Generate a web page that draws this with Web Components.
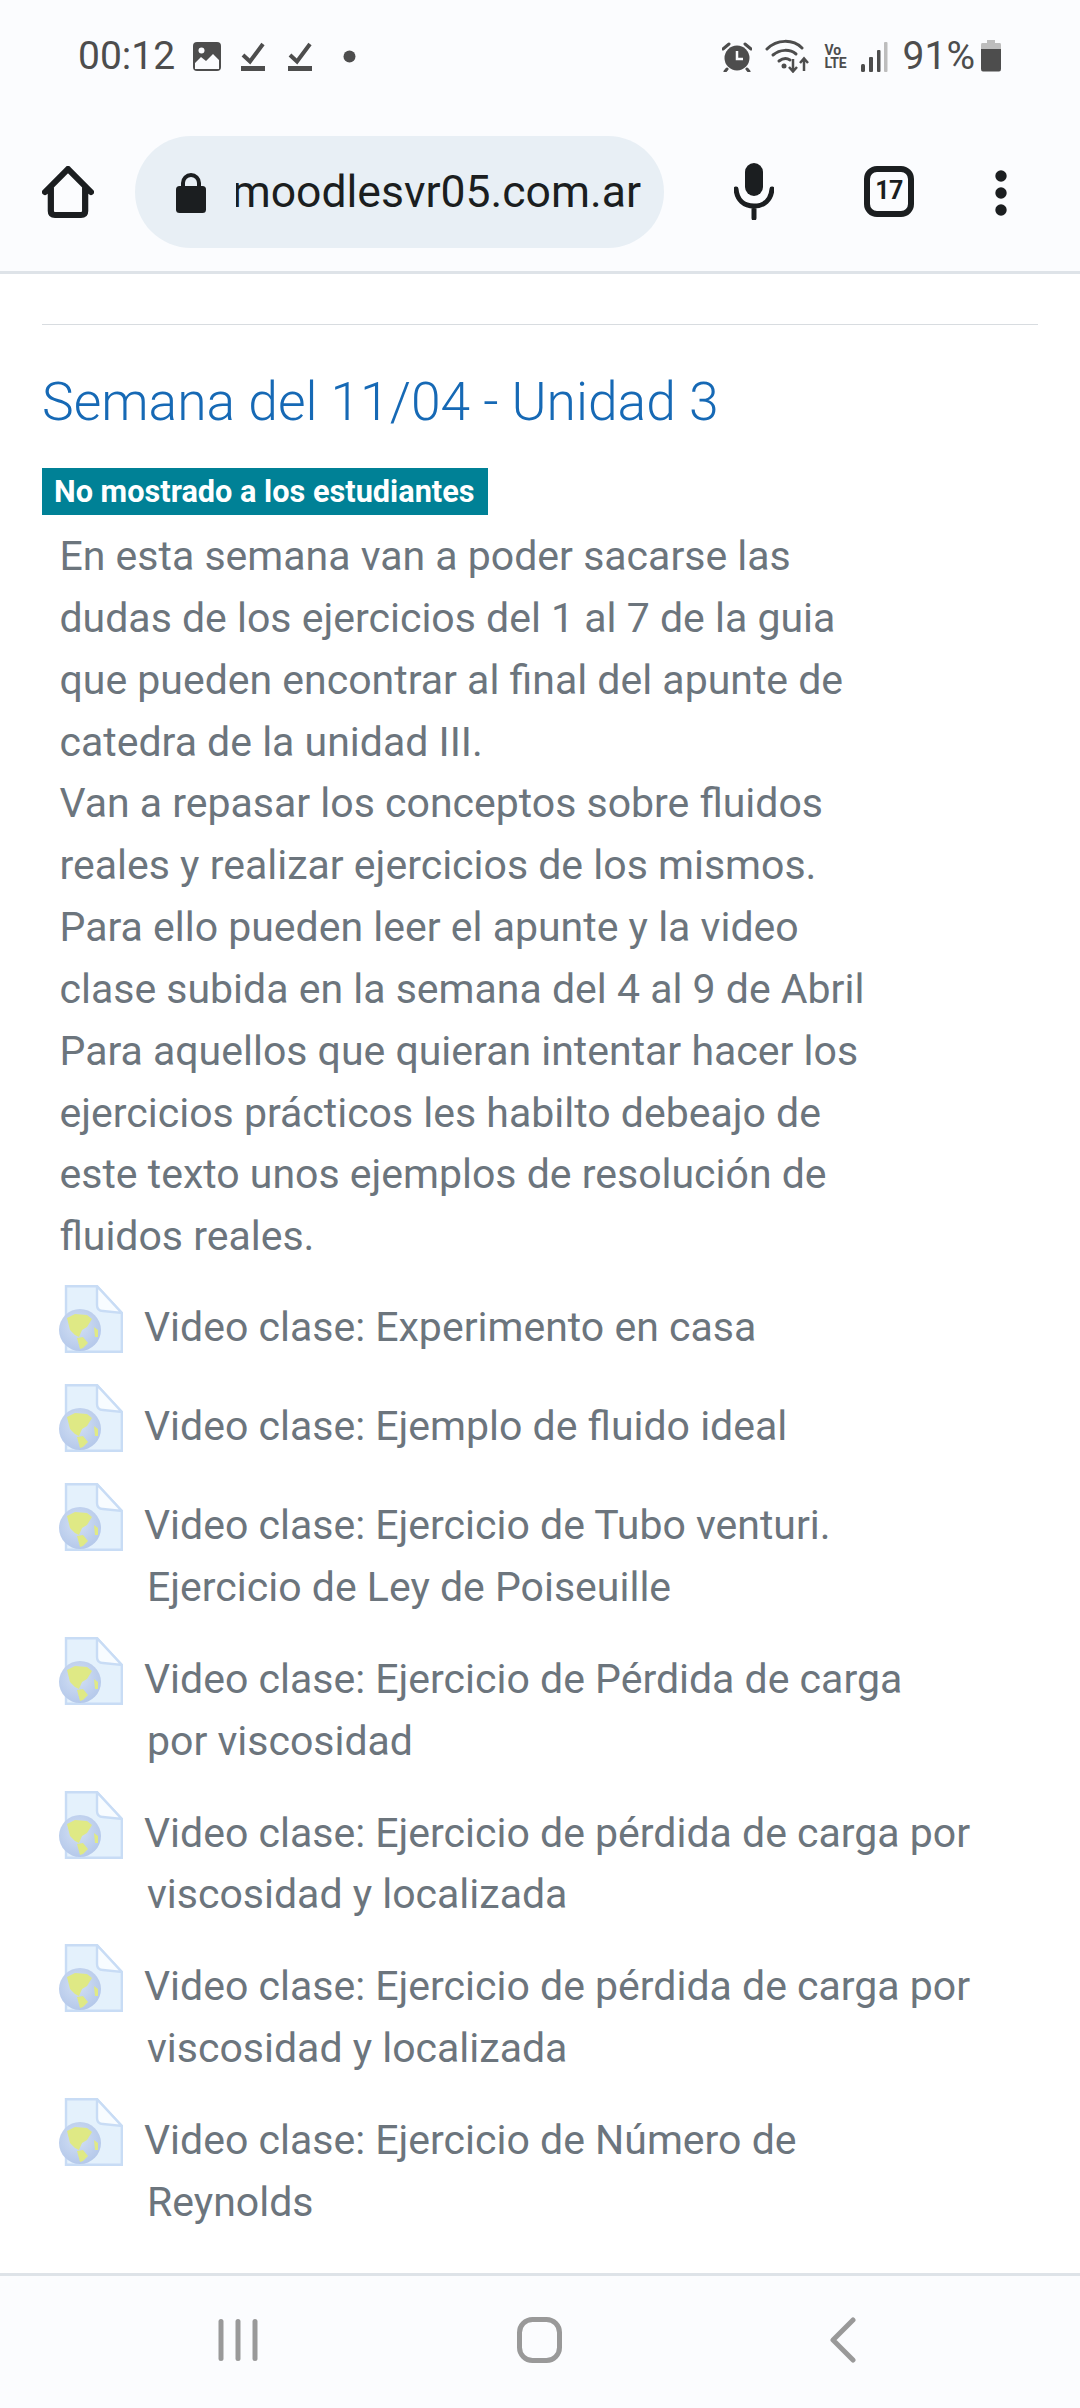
<!DOCTYPE html>
<html lang="es"><head><meta charset="utf-8"><title>Semana del 11/04</title>
<style>
html,body{margin:0;padding:0;background:#fff}
body{width:1080px;height:2408px;overflow:hidden;display:flex;flex-direction:column;font-family:Roboto,"Liberation Sans",sans-serif}
moodle-section{flex:1}
</style></head><body>
<status-bar></status-bar>
<browser-toolbar url="moodlesvr05.com.ar" tabs="17"></browser-toolbar>
<moodle-section heading="Semana del 11/04 - Unidad 3" badge="No mostrado a los estudiantes">
En esta semana van a poder sacarse las<br>dudas de los ejercicios del 1 al 7 de la guia<br>que pueden encontrar al final del apunte de<br>catedra de la unidad III.<br>Van a repasar los conceptos sobre fluidos<br>reales y realizar ejercicios de los mismos.<br>Para ello pueden leer el apunte y la video<br>clase subida en la semana del 4 al 9 de Abril<br>Para aquellos que quieran intentar hacer los<br>ejercicios prácticos les habilto debeajo de<br>este texto unos ejemplos de resolución de<br>fluidos reales.
<activity-item slot="items">Video clase: Experimento en casa</activity-item>
<activity-item slot="items">Video clase: Ejemplo de fluido ideal</activity-item>
<activity-item slot="items">Video clase: Ejercicio de Tubo venturi.<br>Ejercicio de Ley de Poiseuille</activity-item>
<activity-item slot="items">Video clase: Ejercicio de Pérdida de carga<br>por viscosidad</activity-item>
<activity-item slot="items">Video clase: Ejercicio de pérdida de carga por<br>viscosidad y localizada</activity-item>
<activity-item slot="items">Video clase: Ejercicio de pérdida de carga por<br>viscosidad y localizada</activity-item>
<activity-item slot="items">Video clase: Ejercicio de Número de<br>Reynolds</activity-item>
</moodle-section>
<nav-bar></nav-bar>
<script>
function def(name, css, html, setup){
  customElements.define(name, class extends HTMLElement{
    connectedCallback(){
      if(this.shadowRoot) return;
      const r=this.attachShadow({mode:'open'});
      r.innerHTML='<style>'+css+'</style>'+(typeof html==='function'?html(this):html);
    }
  });
}
def('status-bar',`
:host{display:flex;height:136px;box-sizing:border-box;background:#fbfcfe;color:#4d4d4d;align-items:flex-start;padding:0 78px 0 78px;justify-content:space-between;font-family:Roboto,sans-serif}
.g{display:flex;align-items:flex-start;height:136px}
.t{font-size:39px;line-height:44px;margin-top:34px}
svg{display:block;flex:none}
`,`
<div class="g"><span class="t">00:12</span>
<svg style="margin:42px 0 0 17px" width="30" height="30" viewBox="0 0 30 30"><rect x="1" y="0" width="28" height="29" rx="4" fill="#4d4d4d"/><circle cx="9.500" cy="8.500" r="3" fill="#fbfcfe"/><path d="M3 27V21L9 15L14 19L21 12L27 18V27Z" fill="#fbfcfe"/></svg>
<svg style="margin:41px 0 0 18px" width="26" height="31" viewBox="0 0 26 31"><path d="M3 14L10 20.500L23 3" fill="none" stroke="#4d4d4d" stroke-width="4"/><rect x="1" y="25" width="24" height="5" fill="#4d4d4d"/></svg>
<svg style="margin:41px 0 0 21px" width="26" height="31" viewBox="0 0 26 31"><path d="M3 14L10 20.500L23 3" fill="none" stroke="#4d4d4d" stroke-width="4"/><rect x="1" y="25" width="24" height="5" fill="#4d4d4d"/></svg>
<svg style="margin:50px 0 0 30px" width="13" height="13" viewBox="0 0 13 13"><circle cx="6.500" cy="6.500" r="6" fill="#4d4d4d"/></svg>
</div>
<div class="g">
<svg style="margin:42px 0 0" width="30" height="30" viewBox="0 0 30 30"><circle cx="15" cy="16" r="12.500" fill="#4d4d4d"/><path d="M15 9V17H21" fill="none" stroke="#fbfcfe" stroke-width="2.500"/><path d="M1 7L7 2M29 7L23 2M5 27L3 29.500M25 27L27 29.500" stroke="#4d4d4d" stroke-width="3" stroke-linecap="round"/></svg>
<svg style="margin:39px 0 0 13px" width="46" height="34" viewBox="0 0 46 34"><g fill="none" stroke="#4d4d4d" stroke-width="3" stroke-linecap="round"><path d="M2 10C12 0 28 0 37 9"/><path d="M8 16C15 10 25 10 31 15"/><path d="M14 22C18 19 22 19 25 21"/></g><circle cx="19" cy="27" r="2.500" fill="#4d4d4d"/><path d="M28 20V32M24 28L28 32.500L32 28M39 32V20M35 24L39 19.500L43 24" fill="none" stroke="#4d4d4d" stroke-width="2.500"/></svg>
<div style="margin:44px 0 0 14px;width:24px;font:700 14px/13px Roboto,sans-serif;color:#4d4d4d;letter-spacing:-.3px"><div>Vo</div><div>LTE</div></div>
<svg style="margin:42px 0 0 11px" width="28" height="30" viewBox="0 0 28 30"><rect x="1" y="22" width="4" height="8" rx="1.500" fill="#4d4d4d"/><rect x="9" y="15" width="4" height="15" rx="1" fill="#4d4d4d"/><rect x="17" y="8" width="3.500" height="22" rx="1" fill="#4d4d4d"/><rect x="24" y="0" width="3.500" height="30" rx="1" fill="#bdbdbd"/></svg>
<span class="t" style="margin-left:15px">91%</span>
<svg style="margin:40px 0 0 5px" width="22" height="32" viewBox="0 0 22 32"><path d="M7 0H15V3H20Q21 3 21 5V9H1V5Q1 3 2 3H7Z" fill="#bdbdbd"/><path d="M1 9H21V29Q21 31.500 19 31.500H3Q1 31.500 1 29Z" fill="#4d4d4d"/></svg>
</div>`);
def('browser-toolbar',`
:host{display:flex;align-items:flex-start;height:138px;box-sizing:border-box;background:#fbfcfe;border-bottom:3px solid #dee3e8;position:relative;color:#1b1e20;font-family:Roboto,sans-serif}
svg{display:block;flex:none}
.pill{margin:0 0 0 41px;width:529px;height:112px;border-radius:56px;background:#e8eff5;display:flex;align-items:center;box-sizing:border-box;padding-left:41px;flex:none}
.u{margin-left:30px;width:405px;overflow:hidden;white-space:nowrap;font-size:44.500px;line-height:56px;display:flex;justify-content:flex-end}
.tab{margin-left:90px;margin-top:30px;box-sizing:border-box;width:50px;height:51px;border:6px solid #1b1e20;border-radius:13px;font:700 25px/38px Roboto,sans-serif;text-align:center;letter-spacing:-.5px}
`,h=>`
<svg style="margin:30px 0 0 42px" width="52" height="53" viewBox="0 0 50 53" preserveAspectRatio="none"><path d="M3 26L25 3L47 26M8.500 22V45Q8.500 49 12.500 49H37.500Q41.500 49 41.500 45V22" fill="none" stroke="#1b1e20" stroke-width="6" stroke-linejoin="round" stroke-linecap="round"/></svg>
<div class="pill"><svg width="30" height="41" viewBox="0 0 30 41"><path d="M7 18V11A8 8 0 0 1 23 11V18" fill="none" stroke="#1b1e20" stroke-width="4"/><rect x="0" y="14" width="30" height="27" rx="3.500" fill="#1b1e20"/></svg><div class="u"><span style="flex:none">${h.getAttribute('url')}</span></div></div>
<svg style="margin:26px 0 0 70px" width="40" height="58" viewBox="0 0 40 58"><rect x="11" y="1" width="18" height="33" rx="9" fill="#1b1e20"/><path d="M2 27C3 38 10 44 20 44S37 38 38 27M20 44V56" fill="none" stroke="#1b1e20" stroke-width="5" stroke-linecap="round"/></svg>
<div class="tab">${h.getAttribute('tabs')}</div>
<svg style="margin:33px 0 0 80px" width="14" height="48" viewBox="0 0 14 48"><circle cx="7" cy="7" r="5.700" fill="#1b1e20"/><circle cx="7" cy="24" r="5.700" fill="#1b1e20"/><circle cx="7" cy="41" r="5.700" fill="#1b1e20"/></svg>`);
def('moodle-section',`
:host{display:block;box-sizing:border-box;padding:50px 42px 0;background:#fff;font-family:Roboto,sans-serif;color:#6c757d}
.hr{height:1px;background:#d8dce0}
h3{margin:41px 0 0;font-weight:300;font-size:53.400px;line-height:72px;color:#1669b5;white-space:nowrap}
.b{display:table;margin-top:30px;background:#008196;color:#fff;font-weight:700;font-size:30.700px;line-height:47px;padding:0 13px 0 12px;white-space:nowrap}
.s{margin:11px 0 0 17.500px;font-size:41px;line-height:61.850px;white-space:nowrap}
.i{margin:18px 0 0 18px}
`,h=>`
<div class="hr"></div><h3>${h.getAttribute('heading')}</h3><div class="b">${h.getAttribute('badge')}</div>
<div class="s"><slot></slot></div><div class="i"><slot name="items"></slot></div>`);
def('activity-item',`
:host{display:flex;box-sizing:border-box;min-height:99px;padding:11px 0 19.600px 87px;position:relative;font-size:41px;line-height:61.600px;color:#6c757d;white-space:nowrap;text-indent:-3px}
svg{position:absolute;left:-2px;top:-1px}
`,`
<svg width="65" height="68" viewBox="-2 0 65 68"><defs><radialGradient id="g" cx=".45" cy=".4" r=".62"><stop offset="0" stop-color="#d3e0f4"/><stop offset="1" stop-color="#b4c8ea"/></radialGradient></defs>
<path d="M6 1.200H37L61.800 28V66.800H6Z" fill="#e4f1fc" stroke="#c8dcf5" stroke-width="2.400"/><path d="M37 1.200V20Q37 26 43 26L61.800 28Z" fill="#f8fcff" stroke="#c8dcf5" stroke-width="2.400"/>
<circle cx="20" cy="45" r="21" fill="url(#g)"/>
<path d="M7 33L15 29L27 30L32 34L27 42L22 45L19 52L15 50L10 45Z" fill="#dfe985"/><path d="M17 53L23 52L28 58L23 63L20 64Z" fill="#dfe985"/><path d="M34 42L38 45L38 52L35 52Z" fill="#dfe985"/></svg><div><slot></slot></div>`);
def('nav-bar',`
:host{display:block;height:135px;box-sizing:border-box;background:#fbfcfe;border-top:3px solid #dee3e8;position:relative}
.r{display:flex;align-items:flex-start;padding:41px 0 0 218px}
svg{display:block;flex:none}
`,`<div class="r">
<svg width="41" height="46" viewBox="0 0 41 46"><g fill="#999"><rect x="0.500" y="2" width="5" height="42" rx="2.500"/><rect x="17.500" y="2" width="5" height="42" rx="2.500"/><rect x="34.500" y="2" width="5" height="42" rx="2.500"/></g></svg>
<svg style="margin-left:258px" width="46" height="46" viewBox="0 0 46 46"><rect x="2.500" y="2.500" width="40" height="41" rx="13" fill="none" stroke="#999" stroke-width="5"/></svg>
<svg style="margin-left:267px" width="26" height="46" viewBox="0 0 26 46"><path d="M23 3L3 23L23 43" fill="none" stroke="#999" stroke-width="5" stroke-linecap="round" stroke-linejoin="round"/></svg>
</div>`);
</script>
</body></html>
